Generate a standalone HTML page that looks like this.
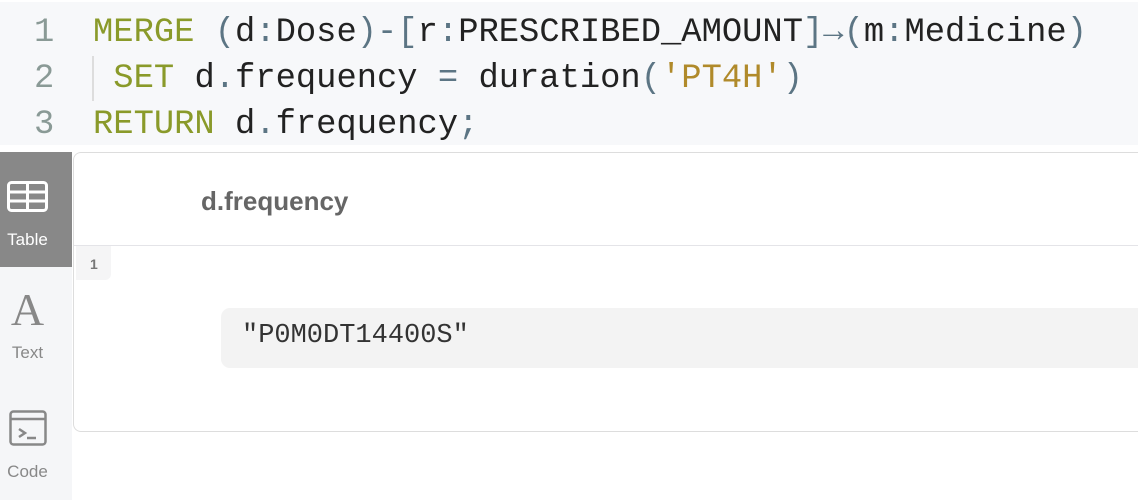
<!DOCTYPE html>
<html><head><style>
body{margin:0;width:1138px;height:500px;background:#fff;position:relative;overflow:hidden;font-family:"Liberation Sans",sans-serif}
.code{position:absolute;left:0;top:2px;width:1138px;height:143px;background:#f7f8fa}
.ln{position:absolute;font-family:"Liberation Mono",monospace;font-size:33.8px;line-height:46px;white-space:pre}
.num{color:#8a9a96;left:34px}
.c{left:93px;color:#222}
.k{color:#8a9a2a}.p{color:#5c7584}.s{color:#b08a2a}
.side{position:absolute;left:0;top:152px;width:72px;height:348px;background:#f5f6f8}
.tab{position:absolute;left:0;width:72px;text-align:center;font-size:16px;color:#888}
.card{position:absolute;left:73px;top:152px;width:1070px;height:278px;border:1px solid #ddd;border-right:none;border-radius:8px 0 0 8px;background:#fff}
</style></head><body>
<div class="code">
<div class="ln num" style="top:8px">1</div>
<div class="ln num" style="top:54px">2</div>
<div class="ln num" style="top:100px">3</div>
<div style="position:absolute;left:92px;top:54px;width:2px;height:45px;background:#ddd"></div>
<div class="ln c" style="top:8px"><span class="k">MERGE</span> <span class="p">(</span>d<span class="p">:</span>Dose<span class="p">)-[</span>r<span class="p">:</span>PRESCRIBED_AMOUNT<span class="p">]→(</span>m<span class="p">:</span>Medicine<span class="p">)</span></div>
<div class="ln c" style="top:54px"> <span class="k">SET</span> d<span class="p">.</span>frequency <span class="p">=</span> duration<span class="p">(</span><span class="s">'PT4H'</span><span class="p">)</span></div>
<div class="ln c" style="top:100px"><span class="k">RETURN</span> d<span class="p">.</span>frequency<span class="p">;</span></div>
</div>
<div class="side">
<div class="tab" style="top:0;height:115px;background:#888;color:#fff">
<svg style="position:absolute;left:7px;top:29px" width="41" height="31" viewBox="0 0 41 31"><rect x="1.5" y="1.5" width="38" height="28" rx="3" fill="none" stroke="#fff" stroke-width="3"/><line x1="2" y1="11" x2="39" y2="11" stroke="#fff" stroke-width="3"/><line x1="2" y1="20" x2="39" y2="20" stroke="#fff" stroke-width="3"/><line x1="20.5" y1="2" x2="20.5" y2="29" stroke="#fff" stroke-width="3"/></svg>
<div style="position:absolute;top:78px;width:55px;text-align:center;font-size:17px">Table</div></div>
<div class="tab" style="top:135px;width:55px"><div style="font-family:'Liberation Serif',serif;font-size:46px;line-height:46px;color:#888;font-weight:normal">A</div><div style="margin-top:10px;font-size:17px">Text</div></div>
<svg style="position:absolute;left:9px;top:258px" width="38" height="38" viewBox="0 0 38 38"><rect x="1.5" y="1.5" width="35" height="33" rx="3" fill="none" stroke="#888" stroke-width="2.5"/><line x1="2" y1="9" x2="36" y2="9" stroke="#888" stroke-width="2.5"/><path d="M10 19l6 4-6 4" fill="none" stroke="#888" stroke-width="2.5"/><line x1="18" y1="28" x2="27" y2="28" stroke="#888" stroke-width="2.5"/></svg>
<div class="tab" style="top:310px;width:55px;font-size:17px">Code</div>
</div>
<div class="card">
<div style="position:absolute;left:127px;top:33px;font-size:26px;font-weight:bold;color:#666">d.frequency</div>
<div style="position:absolute;left:0;top:92px;width:1070px;height:1px;background:#e4e4e8"></div>
<div style="position:absolute;left:2px;top:93px;width:35px;height:34px;background:#f5f5f6;border-radius:0 0 6px 0;font-size:14px;font-weight:bold;color:#777;padding:10px 0 0 14px;box-sizing:border-box">1</div>
<div style="position:absolute;left:147px;top:155px;width:930px;height:60px;background:#f3f3f3;border-radius:9px"></div>
<div style="position:absolute;left:168px;top:168px;font-family:'Liberation Mono',monospace;font-size:27px;color:#333;white-space:pre">"P0M0DT14400S"</div>
</div>
</body></html>
